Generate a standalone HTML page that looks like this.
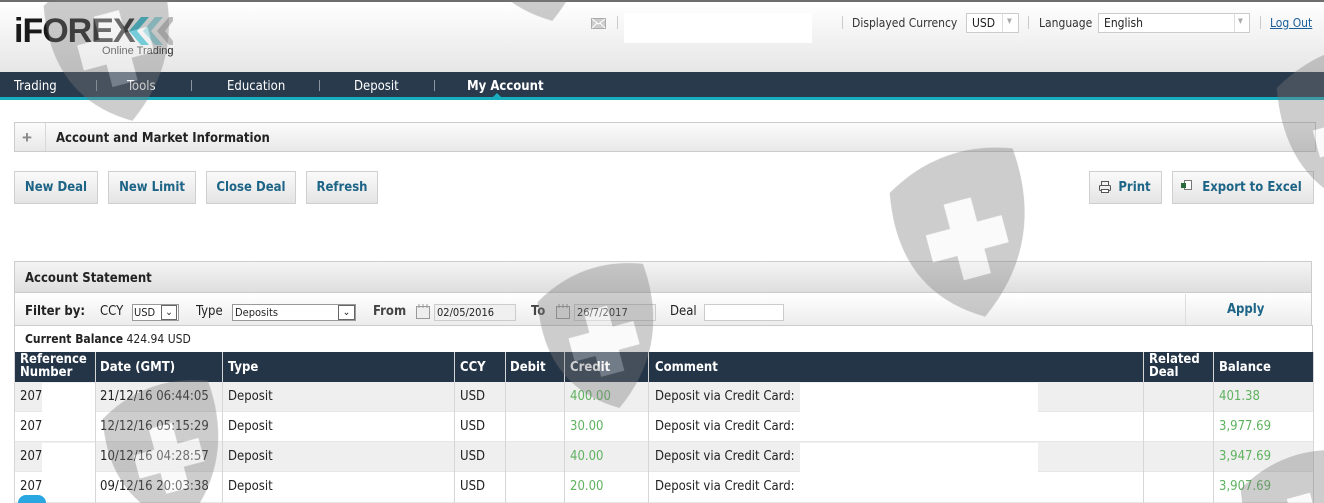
<!DOCTYPE html>
<html style="overflow:hidden;width:1324px;height:503px"><head><meta charset="utf-8"><style>
*{margin:0;padding:0;box-sizing:border-box}
body{width:1324px;height:503px;overflow:hidden;background:#fff;font-family:"DejaVu Sans Condensed","Liberation Sans",sans-serif;font-size:12px;color:#222;position:relative}
.a{position:absolute}
.hdr{left:0;top:0;width:1324px;height:72px;background:linear-gradient(#fff,#e6e6e6);border-top:2px solid #6e6e6e}
.nav{left:0;top:72px;width:1324px;height:25px;background:#2a3a4d}
.teal{left:0;top:97px;width:1324px;height:3px;background:#19aebf}
.ni{top:79px;color:#fff;font-size:13px}
.sep{top:80px;width:1px;height:11px;background:#8c96a2}
.btn{top:171px;height:33px;border:1px solid #cfcfcf;background:linear-gradient(#fafafa,#e4e4e4);color:#1d6486;font-weight:bold;font-size:13px;text-align:center;line-height:32px}
.tb{top:352px;height:30px;background:#253548;left:14px;width:1299px}
.th{color:#fff;font-weight:bold;font-size:13px;line-height:13px}
.row{left:14px;width:1299px;height:30px;border-bottom:1px solid #e6e6e6}
.c{font-size:13px;line-height:30px;top:0}
.vl{width:1px;background:#d6d6d6}
.g{color:#5fb25f}
</style></head><body>
<div class="a hdr"></div>
<div class="a" style="left:14px;top:14px;font:bold 34px 'Liberation Sans',sans-serif;color:#1a1a1a;letter-spacing:-1px;line-height:34px">iFOREX</div>
<svg class="a" style="left:127px;top:17px" width="46" height="28"><path d="M14 0 L2 14 L14 28 L22 28 L10 14 L22 0Z" fill="#2ab6c8"/><path d="M28 0 L16 14 L28 28 L36 28 L24 14 L36 0Z" fill="#8fd4dd"/><path d="M42 0 L30 14 L42 28 L46 28 L46 24 L38 14 L46 4 L46 0Z" fill="#bbb"/></svg>
<div class="a" style="left:102px;top:45px;font:11px 'Liberation Sans',sans-serif;color:#222">Online Trading</div>
<svg class="a" style="left:591px;top:18px" width="15" height="11"><rect x=".5" y=".5" width="14" height="10" fill="#ccc" stroke="#aaa"/><path d="M1 1 L7.5 6 L14 1 M1 10 L6 5 M14 10 L9 5" stroke="#fff" fill="none"/></svg>
<div class="a" style="left:617px;top:16px;width:1px;height:13px;background:#ccc"></div>
<div class="a" style="left:624px;top:13px;width:188px;height:30px;background:#fff"></div>
<div class="a" style="left:842px;top:16px;width:1px;height:13px;background:#ccc"></div>
<div class="a" style="left:852px;top:16px;color:#333">Displayed Currency</div>
<div class="a" style="left:966px;top:13px;width:53px;height:20px;border:1px solid #ccc;background:#fff;padding:2px 5px">USD</div>
<div class="a" style="left:1002px;top:14px;width:1px;height:18px;background:#ddd"></div>
<div class="a" style="left:1007px;top:17px;font-size:7px;color:#aaa">▼</div>
<div class="a" style="left:1028px;top:16px;width:1px;height:13px;background:#ccc"></div>
<div class="a" style="left:1039px;top:16px;color:#333">Language</div>
<div class="a" style="left:1098px;top:13px;width:152px;height:20px;border:1px solid #ccc;background:#fff;padding:2px 5px">English</div>
<div class="a" style="left:1234px;top:14px;width:1px;height:18px;background:#ddd"></div>
<div class="a" style="left:1238px;top:17px;font-size:7px;color:#aaa">▼</div>
<div class="a" style="left:1260px;top:16px;width:1px;height:13px;background:#ccc"></div>
<div class="a" style="left:1270px;top:16px;color:#1a5f9a;text-decoration:underline">Log Out</div>

<div class="a nav"></div><div class="a teal"></div>
<div class="a ni" style="left:14px">Trading</div>
<div class="a sep" style="left:96px"></div>
<div class="a ni" style="left:127px">Tools</div>
<div class="a sep" style="left:191px"></div>
<div class="a ni" style="left:227px">Education</div>
<div class="a sep" style="left:319px"></div>
<div class="a ni" style="left:354px">Deposit</div>
<div class="a sep" style="left:434px"></div>
<div class="a ni" style="left:467px;font-weight:bold">My Account</div>
<div class="a" style="left:493px;top:93px;width:0;height:0;border:4px solid transparent;border-bottom-color:#19aebf;border-top:0"></div>

<div class="a" style="left:14px;top:122px;width:1302px;height:30px;border:1px solid #ccc;background:linear-gradient(#fbfbfb,#e8e8e8)"></div>
<div class="a" style="left:45px;top:123px;width:1px;height:28px;background:#d8d8d8"></div>
<div class="a" style="left:22px;top:129px;font:bold 17px 'Liberation Sans';color:#888;line-height:17px">+</div>
<div class="a" style="left:56px;top:131px;font-weight:bold;font-size:13px">Account and Market Information</div>

<div class="a btn" style="left:14px;width:84px">New Deal</div>
<div class="a btn" style="left:108px;width:88px">New Limit</div>
<div class="a btn" style="left:206px;width:90px">Close Deal</div>
<div class="a btn" style="left:306px;width:72px">Refresh</div>
<div class="a btn" style="left:1089px;width:73px;padding-left:18px">Print</div>
<svg class="a" style="left:1099px;top:181px" width="12" height="12"><rect x="2.5" y=".5" width="7" height="4" fill="none" stroke="#555"/><rect x=".5" y="4.5" width="11" height="5" rx="1" fill="none" stroke="#555"/><rect x="2.5" y="8.5" width="7" height="3" fill="#fff" stroke="#555"/></svg>
<div class="a btn" style="left:1172px;width:142px;padding-left:18px">Export to Excel</div>
<svg class="a" style="left:1181px;top:180px" width="11" height="12"><rect x="3.5" y=".5" width="7" height="9" fill="#fff" stroke="#777"/><rect x="0" y="3" width="5" height="5" fill="#2a6a3a"/></svg>

<div class="a" style="left:14px;top:261px;width:1298px;height:65px;border:1px solid #ccc"></div>
<div class="a" style="left:15px;top:262px;width:1296px;height:31px;background:linear-gradient(#f4f4f4,#dedede);border-bottom:1px solid #ccc"></div>
<div class="a" style="left:25px;top:271px;font-weight:bold;font-size:13px">Account Statement</div>
<div class="a" style="left:15px;top:294px;width:1296px;height:31px;background:linear-gradient(#fff,#ececec)"></div>
<div class="a" style="left:1185px;top:294px;width:1px;height:31px;background:#ddd"></div>
<div class="a" style="left:1227px;top:302px;color:#1d6486;font-weight:bold;font-size:13px">Apply</div>
<div class="a" style="left:25px;top:304px;font-weight:bold;font-size:13px">Filter by:</div>
<div class="a" style="left:100px;top:304px;font-size:13px">CCY</div>
<div class="a" style="left:132px;top:304px;width:47px;height:17px;border:1px solid #999;background:#fff;font-size:11px;padding:1px 1px">USD</div>
<div class="a" style="left:161px;top:305px;width:16px;height:15px;border:1px solid #666;font-size:10px;text-align:center;line-height:13px">⌄</div>
<div class="a" style="left:196px;top:304px;font-size:13px">Type</div>
<div class="a" style="left:232px;top:304px;width:124px;height:17px;border:1px solid #999;background:#fff;font-size:11px;padding:1px 2px">Deposits</div>
<div class="a" style="left:338px;top:305px;width:17px;height:15px;border:1px solid #666;font-size:10px;text-align:center;line-height:13px">⌄</div>
<div class="a" style="left:373px;top:304px;font-weight:bold;font-size:13px;color:#444">From</div>
<svg class="a" style="left:416px;top:304px" width="14" height="15"><rect x=".5" y="2.5" width="13" height="12" fill="#eee" stroke="#999"/><path d="M3 0v4M7 0v4M11 0v4" stroke="#999"/></svg>
<div class="a" style="left:434px;top:304px;width:82px;height:17px;border:1px solid #ccc;background:#f0f0f0;font-size:11px;padding:1px 2px">02/05/2016</div>
<div class="a" style="left:531px;top:304px;font-weight:bold;font-size:13px;color:#444">To</div>
<svg class="a" style="left:556px;top:304px" width="14" height="15"><rect x=".5" y="2.5" width="13" height="12" fill="#eee" stroke="#999"/><path d="M3 0v4M7 0v4M11 0v4" stroke="#999"/></svg>
<div class="a" style="left:574px;top:304px;width:82px;height:17px;border:1px solid #ccc;background:#f0f0f0;font-size:11px;padding:1px 2px">26/7/2017</div>
<div class="a" style="left:670px;top:304px;font-size:13px">Deal</div>
<div class="a" style="left:704px;top:304px;width:80px;height:17px;border:1px solid #ccc;background:#fff"></div>
<div class="a" style="left:14px;top:325px;width:1px;height:27px;background:#ccc"></div>
<div class="a" style="left:1312px;top:325px;width:1px;height:27px;background:#ccc"></div>
<div class="a" style="left:25px;top:332px;font-size:12px"><b>Current Balance</b> 424.94 USD</div>

<div class="a tb"></div>
<div class="a th" style="left:20px;top:353px">Reference<br>Number</div>
<div class="a th" style="left:100px;top:361px">Date (GMT)</div>
<div class="a th" style="left:228px;top:361px">Type</div>
<div class="a th" style="left:460px;top:361px">CCY</div>
<div class="a th" style="left:510px;top:361px">Debit</div>
<div class="a th" style="left:570px;top:361px">Credit</div>
<div class="a th" style="left:655px;top:361px">Comment</div>
<div class="a th" style="left:1149px;top:353px">Related<br>Deal</div>
<div class="a th" style="left:1219px;top:361px">Balance</div>

<div class="a row" style="top:382px;background:#efefef"></div>
<div class="a row" style="top:412px"></div>
<div class="a row" style="top:442px;background:#efefef"></div>
<div class="a row" style="top:472px;height:31px"></div>
<div class="a" style="left:42px;top:383px;width:53px;height:29px;background:#fff"></div>
<div class="a" style="left:42px;top:443px;width:53px;height:29px;background:#fff"></div>
<div class="a" style="left:800px;top:383px;width:238px;height:29px;background:#fff"></div>
<div class="a" style="left:800px;top:443px;width:238px;height:29px;background:#fff"></div>

<div class="a vl" style="left:14px;top:352px;height:151px"></div>
<div class="a vl" style="left:95px;top:352px;height:151px"></div>
<div class="a vl" style="left:222px;top:352px;height:151px"></div>
<div class="a vl" style="left:454px;top:352px;height:151px"></div>
<div class="a vl" style="left:505px;top:352px;height:151px"></div>
<div class="a vl" style="left:564px;top:352px;height:151px"></div>
<div class="a vl" style="left:648px;top:352px;height:151px"></div>
<div class="a vl" style="left:1143px;top:352px;height:151px"></div>
<div class="a vl" style="left:1213px;top:352px;height:151px"></div>
<div class="a vl" style="left:1313px;top:352px;height:151px"></div>

<div class="a" style="left:0;top:382px;width:1324px;height:30px"><div class="a c" style="left:20px">207</div><div class="a c" style="left:100px">21/12/16 06:44:05</div><div class="a c" style="left:228px">Deposit</div><div class="a c" style="left:460px">USD</div><div class="a c g" style="left:570px">400.00</div><div class="a c" style="left:655px">Deposit via Credit Card:</div><div class="a c g" style="left:1219px">401.38</div></div>
<div class="a" style="left:0;top:412px;width:1324px;height:30px"><div class="a c" style="left:20px">207</div><div class="a c" style="left:100px">12/12/16 05:15:29</div><div class="a c" style="left:228px">Deposit</div><div class="a c" style="left:460px">USD</div><div class="a c g" style="left:570px">30.00</div><div class="a c" style="left:655px">Deposit via Credit Card:</div><div class="a c g" style="left:1219px">3,977.69</div></div>
<div class="a" style="left:0;top:442px;width:1324px;height:30px"><div class="a c" style="left:20px">207</div><div class="a c" style="left:100px">10/12/16 04:28:57</div><div class="a c" style="left:228px">Deposit</div><div class="a c" style="left:460px">USD</div><div class="a c g" style="left:570px">40.00</div><div class="a c" style="left:655px">Deposit via Credit Card:</div><div class="a c g" style="left:1219px">3,947.69</div></div>
<div class="a" style="left:0;top:472px;width:1324px;height:30px"><div class="a c" style="left:20px">207</div><div class="a c" style="left:100px">09/12/16 20:03:38</div><div class="a c" style="left:228px">Deposit</div><div class="a c" style="left:460px">USD</div><div class="a c g" style="left:570px">20.00</div><div class="a c" style="left:655px">Deposit via Credit Card:</div><div class="a c g" style="left:1219px">3,907.69</div></div>
<div class="a" style="left:18px;top:495px;width:28px;height:8px;border-radius:14px 14px 0 0;background:#2aa7e0"></div>

<svg class="a" style="left:0;top:0;pointer-events:none" width="1324" height="503">
<defs><g id="sh"><path d="M5 22 Q50 -4 98 14 Q104 85 48 125 Q-8 92 5 22Z" fill="#7a7a7a"/><path d="M40 40h20v18h18v20h-18v18h-20v-18h-18v-20h18z" fill="#fff" opacity=".9"/></g></defs>
<g opacity=".38">
<use href="#sh" transform="translate(875,165) rotate(-15) scale(1.4)"/>
<use href="#sh" transform="translate(525,278) rotate(-15) scale(1.2)"/>
<use href="#sh" transform="translate(30,-20) rotate(-15) scale(1.3)"/>
<use href="#sh" transform="translate(450,-120) rotate(-15) scale(1.3)"/>
<use href="#sh" transform="translate(90,395) rotate(-15) scale(1.2)"/>
<use href="#sh" transform="translate(1262,60) rotate(-15) scale(1.4)"/>
<use href="#sh" transform="translate(1228,465) rotate(-15) scale(1.2)"/>
</g></svg>
</body></html>
